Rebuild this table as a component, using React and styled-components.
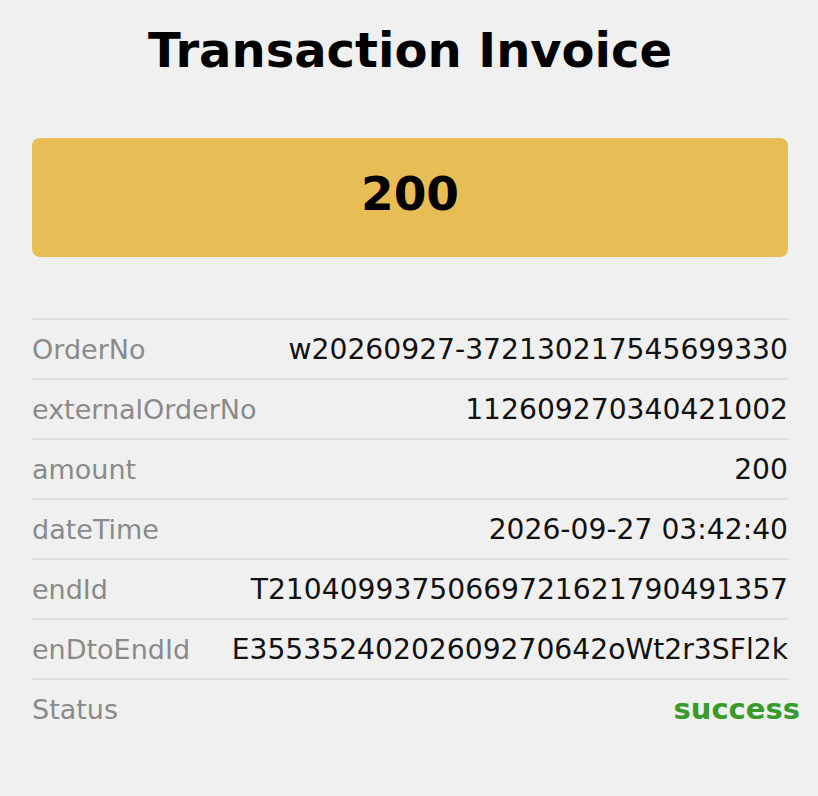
import React from "react";
import styled, { createGlobalStyle } from "styled-components";

const GlobalStyle = createGlobalStyle`
    html, body {
        margin: 0;
        padding: 0;
        background: #f0f0f0;
    }
    body {
        font-family: "DejaVu Sans", sans-serif;
    }
`;

const Page = styled.div`
    min-height: 796px;
    box-sizing: border-box;
    padding: 22px 30px 0 32px;
    background: #f0f0f0;
`;

const Title = styled.h1`
    margin: 0;
    text-align: center;
    font-size: 48px;
    font-weight: bold;
    line-height: 56px;
    color: #000;
`;

const AmountBox = styled.div`
    margin-top: 60px;
    height: 119px;
    box-sizing: border-box;
    padding-bottom: 9px;
    border-radius: 8px;
    background: #e8bd55;
    display: flex;
    align-items: center;
    justify-content: center;
    font-size: 47px;
    font-weight: bold;
    color: #000;
`;

const Details = styled.div`
    margin-top: 61px;
    border-top: 2px solid #dedede;
`;

const Row = styled.div`
    display: flex;
    justify-content: space-between;
    align-items: center;
    height: 58px;
    border-bottom: ${p => (p.last ? "none" : "2px solid #dedede")};
`;

const Label = styled.span`
    font-size: 27px;
    color: #8a8a8a;
    white-space: nowrap;
`;

const Value = styled.span`
    font-size: 28.2px;
    color: #111;
    white-space: nowrap;
    text-align: right;
`;

const Status = styled.span`
    font-size: 29px;
    font-weight: bold;
    color: #389a28;
    margin-right: -12px;
    white-space: nowrap;
`;

const rows = [
    {label: "OrderNo", value: "w20260927-372130217545699330"},
    {label: "externalOrderNo", value: "112609270340421002"},
    {label: "amount", value: "200"},
    {label: "dateTime", value: "2026-09-27 03:42:40"},
    {label: "endId", value: "T21040993750669721621790491357"},
    {label: "enDtoEndId", value: "E35535240202609270642oWt2r3SFl2k"},
];

export default function App() {
    return (
        <>
            <GlobalStyle/>
            <Page>
                <Title>Transaction Invoice</Title>
                <AmountBox>200</AmountBox>
                <Details>
                    {rows.map(row => (
                        <Row key={row.label}>
                            <Label>{row.label}</Label>
                            <Value>{row.value}</Value>
                        </Row>
                    ))}
                    <Row last>
                        <Label>Status</Label>
                        <Status>success</Status>
                    </Row>
                </Details>
            </Page>
        </>
    );
}
